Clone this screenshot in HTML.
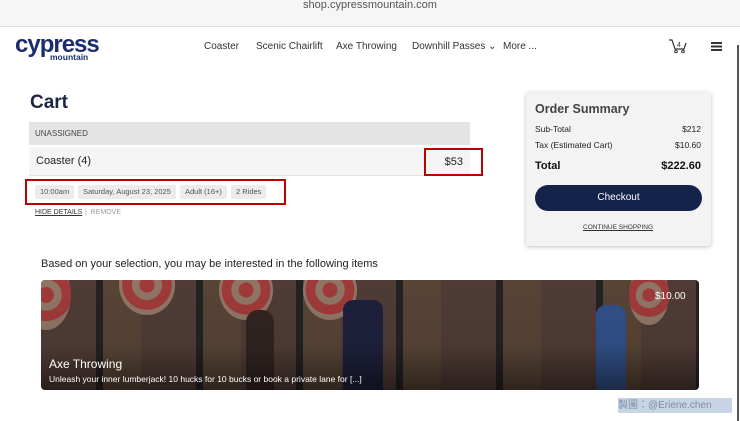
<!DOCTYPE html>
<html><head><meta charset="utf-8"><style>
*{margin:0;padding:0;box-sizing:border-box}
body{width:740px;height:421px;overflow:hidden;background:#fff;font-family:"Liberation Sans",Arial,sans-serif;position:relative;color:#222}
.abs{position:absolute}
.url{left:0;top:0;width:740px;height:27px;background:#f6f6f6;border-bottom:1px solid #ddd;text-align:center;font-size:11px;color:#555;line-height:11px}
.nav{top:41px;font-size:10px;color:#333}
.chip{position:absolute;top:185px;height:14px;background:#ececec;font-size:7.5px;color:#555;line-height:14px;padding:0 5px;border-radius:2px}
.tgt{position:absolute;border-radius:50%;background:radial-gradient(circle,#b44 0 18%,#a88a78 19% 36%,#b44 37% 60%,#a88a78 61%)}
.r{text-align:right;width:80px}
</style></head><body>
<div class="abs url">shop.cypressmountain.com</div>
<div class="abs" style="left:15px;top:31px;font-size:24px;font-weight:bold;color:#1b2d6e;letter-spacing:-1px">cypress</div>
<div class="abs" style="left:50px;top:52px;font-size:8.5px;font-weight:bold;color:#1b2d6e">mountain</div>
<div class="abs nav" style="left:204px">Coaster</div>
<div class="abs nav" style="left:256px">Scenic Chairlift</div>
<div class="abs nav" style="left:336px">Axe Throwing</div>
<div class="abs nav" style="left:412px">Downhill Passes ⌄</div>
<div class="abs nav" style="left:503px">More ...</div>
<svg class="abs" style="left:668px;top:38px" width="20" height="16" viewBox="0 0 20 16"><path d="M1 2h3l3 9h9l2-6" fill="none" stroke="#333" stroke-width="1.2"/><circle cx="8" cy="13.5" r="1.3" fill="none" stroke="#333"/><circle cx="15" cy="13.5" r="1.3" fill="none" stroke="#333"/><text x="9" y="9" font-size="7" font-family="Liberation Sans" fill="#333">4</text></svg>
<div class="abs" style="left:711px;top:42px;width:11px;height:1.5px;background:#333;box-shadow:0 3.5px 0 #333,0 7px 0 #333"></div>
<div class="abs" style="left:737px;top:45px;width:2px;height:376px;background:#555"></div>

<div class="abs" style="left:30px;top:92px;font-size:19px;font-weight:bold;color:#1b2544">Cart</div>
<div class="abs" style="left:29px;top:122px;width:441px;height:23px;background:#e4e4e4;font-size:8px;color:#444;line-height:23px;padding-left:6px">UNASSIGNED</div>
<div class="abs" style="left:29px;top:147px;width:441px;height:29px;background:#f5f5f5;border-bottom:1px solid #e4e4e4;font-size:11px;color:#222;line-height:29px;padding-left:7px">Coaster (4)</div>
<div class="abs" style="left:424px;top:148px;width:59px;height:28px;border:2px solid #b00;font-size:11px;line-height:24px;text-align:right;padding-right:18px;color:#222">$53</div>
<div class="abs" style="left:25px;top:179px;width:261px;height:26px;border:2px solid #b00"></div>
<div class="chip" style="left:35px">10:00am</div>
<div class="chip" style="left:78px">Saturday, August 23, 2025</div>
<div class="chip" style="left:180px">Adult (16+)</div>
<div class="chip" style="left:231px">2 Rides</div>
<div class="abs" style="left:35px;top:209px;font-size:7px;color:#333;text-decoration:underline">HIDE DETAILS</div>
<div class="abs" style="left:83px;top:209px;font-size:7px;color:#999">&nbsp;|&nbsp; REMOVE</div>

<div class="abs" style="left:526px;top:92px;width:185px;height:154px;background:#f3f3f3;border-radius:3px;box-shadow:0 1px 4px rgba(0,0,0,.25)"></div>
<div class="abs" style="left:535px;top:102px;font-size:12.5px;font-weight:bold;color:#444">Order Summary</div>
<div class="abs" style="left:535px;top:124px;font-size:8.5px">Sub-Total</div>
<div class="abs r" style="left:621px;top:124px;font-size:8.5px">$212</div>
<div class="abs" style="left:535px;top:140px;font-size:8.5px">Tax (Estimated Cart)</div>
<div class="abs r" style="left:621px;top:140px;font-size:8.5px">$10.60</div>
<div class="abs" style="left:535px;top:160px;font-size:11px;font-weight:bold;color:#111">Total</div>
<div class="abs r" style="left:621px;top:160px;font-size:11px;font-weight:bold;color:#111">$222.60</div>
<div class="abs" style="left:535px;top:185px;width:167px;height:26px;border-radius:13px;background:#14234a;color:#fff;font-size:10px;line-height:26px;text-align:center">Checkout</div>
<div class="abs" style="left:583px;top:224px;font-size:6.5px;text-decoration:underline;color:#333">CONTINUE SHOPPING</div>

<div class="abs" style="left:41px;top:258px;font-size:11px;color:#222">Based on your selection, you may be interested in the following items</div>
<div class="abs" style="left:41px;top:280px;width:658px;height:110px;border-radius:4px;overflow:hidden;background:repeating-linear-gradient(90deg,#5e463f 0 55px,#2a2729 55px 62px,#67503f 62px 100px);">
 <div class="tgt" style="left:-20px;top:-20px;width:50px;height:70px"></div>
 <div class="tgt" style="left:78px;top:-25px;width:56px;height:60px"></div>
 <div class="tgt" style="left:178px;top:-20px;width:54px;height:60px"></div>
 <div class="tgt" style="left:262px;top:-20px;width:54px;height:60px"></div>
 <div class="tgt" style="left:588px;top:-15px;width:40px;height:60px"></div>
 <div class="abs" style="left:205px;top:30px;width:28px;height:80px;background:#3a2b28;border-radius:12px 12px 0 0"></div>
 <div class="abs" style="left:302px;top:20px;width:40px;height:90px;background:#232646;border-radius:10px 10px 0 0"></div>
 <div class="abs" style="left:555px;top:25px;width:30px;height:85px;background:#3a5ea0;border-radius:10px 10px 0 0"></div>
 <div class="abs" style="left:0;top:0;width:658px;height:110px;background:linear-gradient(180deg,rgba(0,0,0,.15),rgba(0,0,0,.2) 60%,rgba(0,0,0,.55))"></div>
 <div class="abs" style="left:8px;top:77px;font-size:12px;color:#fff">Axe Throwing</div>
 <div class="abs" style="left:8px;top:94px;font-size:8.5px;color:#fff">Unleash your inner lumberjack! 10 hucks for 10 bucks or book a private lane for [...]</div>
 <div class="abs" style="left:614px;top:11px;font-size:10px;color:#fff">$10.00</div>
</div>
<div class="abs" style="left:618px;top:398px;height:15px;width:114px;background:#c6d4e4;font-size:10px;line-height:15px;color:#7d8ea8;font-family:'Liberation Sans','Noto Sans CJK TC',sans-serif">製圖：@Eriene.chen</div>
</body></html>
